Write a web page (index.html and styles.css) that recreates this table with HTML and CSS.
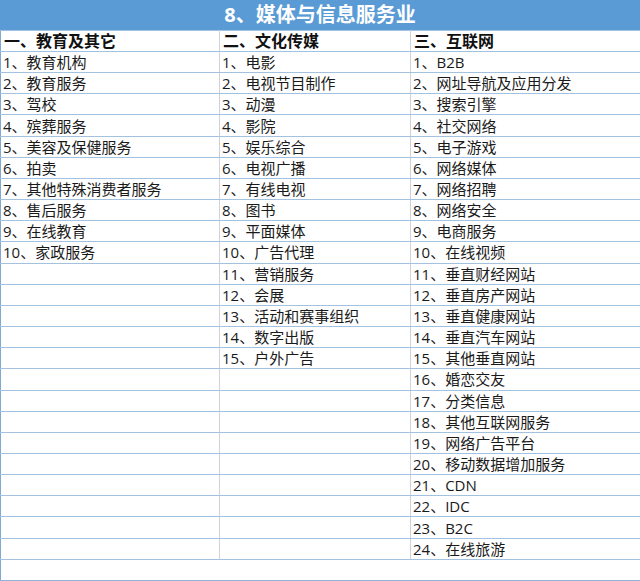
FILE: index.html
```html
<!DOCTYPE html>
<html lang="zh-CN">
<head>
<meta charset="utf-8">
<link rel="stylesheet" href="styles.css">
</head>
<body>
<div class="sheet">
  <div class="title">8、媒体与信息服务业</div>
  <table class="grid">
    <colgroup><col class="c1"><col class="c2"><col class="c3"></colgroup>
    <tr class="head"><td>一、教育及其它</td><td>二、文化传媒</td><td>三、互联网</td></tr>
    <tr><td>1、教育机构</td><td>1、电影</td><td>1、B2B</td></tr>
    <tr><td>2、教育服务</td><td>2、电视节目制作</td><td>2、网址导航及应用分发</td></tr>
    <tr><td>3、驾校</td><td>3、动漫</td><td>3、搜索引擎</td></tr>
    <tr><td>4、殡葬服务</td><td>4、影院</td><td>4、社交网络</td></tr>
    <tr><td>5、美容及保健服务</td><td>5、娱乐综合</td><td>5、电子游戏</td></tr>
    <tr><td>6、拍卖</td><td>6、电视广播</td><td>6、网络媒体</td></tr>
    <tr><td>7、其他特殊消费者服务</td><td>7、有线电视</td><td>7、网络招聘</td></tr>
    <tr><td>8、售后服务</td><td>8、图书</td><td>8、网络安全</td></tr>
    <tr><td>9、在线教育</td><td>9、平面媒体</td><td>9、电商服务</td></tr>
    <tr><td>10、家政服务</td><td>10、广告代理</td><td>10、在线视频</td></tr>
    <tr><td></td><td>11、营销服务</td><td>11、垂直财经网站</td></tr>
    <tr><td></td><td>12、会展</td><td>12、垂直房产网站</td></tr>
    <tr><td></td><td>13、活动和赛事组织</td><td>13、垂直健康网站</td></tr>
    <tr><td></td><td>14、数字出版</td><td>14、垂直汽车网站</td></tr>
    <tr><td></td><td>15、户外广告</td><td>15、其他垂直网站</td></tr>
    <tr><td></td><td></td><td>16、婚恋交友</td></tr>
    <tr><td></td><td></td><td>17、分类信息</td></tr>
    <tr><td></td><td></td><td>18、其他互联网服务</td></tr>
    <tr><td></td><td></td><td>19、网络广告平台</td></tr>
    <tr><td></td><td></td><td>20、移动数据增加服务</td></tr>
    <tr><td></td><td></td><td>21、CDN</td></tr>
    <tr><td></td><td></td><td>22、IDC</td></tr>
    <tr><td></td><td></td><td>23、B2C</td></tr>
    <tr><td></td><td></td><td>24、在线旅游</td></tr>
    <tr class="blank"><td colspan="3"></td></tr>
  </table>
</div>
</body>
</html>
```

FILE: styles.css
```css
html, body {
  margin: 0;
  padding: 0;
  background: #ffffff;
}
.sheet {
  width: 640px;
  font-family: "Open Sans", "Noto Sans CJK SC", sans-serif;
  color: #1a1a1a;
}
.title {
  height: 30px;
  line-height: 30px;
  background: #5b9bd5;
  color: #ffffff;
  font-weight: 700;
  font-size: 20px;
  text-align: center;
}
.grid {
  width: 640px;
  border-collapse: collapse;
  table-layout: fixed;
  border-left: 1px solid #7fa9d3;
  border-right: 1px solid #9fbfdc;
  border-bottom: 1px solid #8fb4d8;
}
.c1 { width: 219px; }
.c2 { width: 191px; }
.c3 { width: 230px; }
.grid tr {
  height: 21.16px;
}
.grid td {
  padding: 0 0 0 2px;
  font-size: 15px;
  line-height: 20px;
  white-space: nowrap;
  overflow: hidden;
  border-top: 1px solid #a3c2df;
  border-bottom: 1px solid #a3c2df;
  border-left: 1px solid #cdd3d9;
  border-right: 1px solid #cdd3d9;
  vertical-align: middle;
}
.grid tr td:first-child {
  border-left: 1px solid #7fa9d3;
}
.grid tr td:last-child {
  border-right: 1px solid #9fbfdc;
}
.grid .head td {
  font-weight: 700;
  font-size: 16px;
  padding-left: 3px;
  color: #111;
}
.grid .head {
  height: 21px;
}
.grid .blank td {
  border-bottom: 1px solid #8fb4d8;
}
```
